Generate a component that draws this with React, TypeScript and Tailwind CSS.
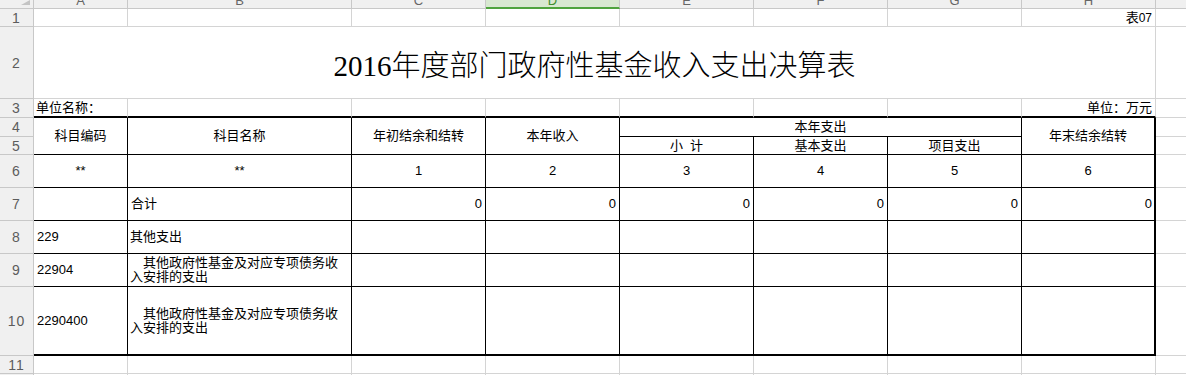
import React from "react";

const GL = "border-[#d4d4d4]";

const colLetters = [
  { l: "A", cls: "col-start-2" },
  { l: "B", cls: "col-start-3" },
  { l: "C", cls: "col-start-4" },
  { l: "D", cls: "col-start-5" },
  { l: "E", cls: "col-start-6" },
  { l: "F", cls: "col-start-7" },
  { l: "G", cls: "col-start-8" },
  { l: "H", cls: "col-start-9" },
];

const rowHeads = [
  { n: "1", cls: "row-start-2" },
  { n: "2", cls: "row-start-3" },
  { n: "3", cls: "row-start-4" },
  { n: "4", cls: "row-start-5" },
  { n: "5", cls: "row-start-6" },
  { n: "6", cls: "row-start-7" },
  { n: "7", cls: "row-start-8" },
  { n: "8", cls: "row-start-9" },
  { n: "9", cls: "row-start-10" },
  { n: "10", cls: "row-start-11" },
  { n: "11", cls: "row-start-12" },
  { n: "", cls: "row-start-13" },
];

const dataCols = [
  "col-start-4",
  "col-start-5",
  "col-start-6",
  "col-start-7",
  "col-start-8",
];

export default function App() {
  const base =
    "box-border overflow-hidden flex items-center text-[13px] leading-[14px] text-black";
  const tcell = `${base} border-r border-b border-black bg-white`;
  const gcell = `${base} border-r border-b ${GL} bg-white`;
  const num = "text-[12px]";

  return (
    <div
      className="w-[1186px] h-[375px] overflow-hidden bg-white"
      style={{ fontFamily: '"Liberation Sans", "Noto Sans CJK SC", sans-serif' }}
    >
      <div className="grid w-[1186px] grid-cols-[34px_94px_224px_134px_134px_134px_134px_134px_134px_30px] grid-rows-[9px_18px_72px_19px_19px_18px_33px_33px_33px_33px_69px_18px_2px]">
        {/* corner */}
        <div className="col-start-1 row-start-1 box-border border-r border-b border-[#c8c8c8] bg-[#f0f0f0] relative overflow-hidden">
          <svg className="absolute right-[3px] top-0" width="9" height="5" viewBox="0 0 9 5">
            <polygon points="9,0 9,5 0,5" fill="#c4c4c4" />
          </svg>
        </div>
        {/* column headers */}
        {colLetters.map((c) =>
          c.l === "D" ? (
            <div
              key={c.l}
              className={`${c.cls} row-start-1 box-border border-r border-b-2 border-r-[#c8c8c8] border-b-[#4fa33e] bg-[#d8e8d1] overflow-hidden flex justify-center`}
            >
              <span className="block -mt-[6px] leading-[13px] text-[13px] text-[#3f8f2f]">{c.l}</span>
            </div>
          ) : (
            <div
              key={c.l}
              className={`${c.cls} row-start-1 box-border border-r border-b border-[#c8c8c8] bg-[#f0f0f0] overflow-hidden flex justify-center`}
            >
              <span className="block -mt-[6px] leading-[13px] text-[13px] text-[#666666]">{c.l}</span>
            </div>
          )
        )}
        <div className="col-start-10 row-start-1 box-border border-b border-[#c8c8c8] bg-[#f0f0f0]" />

        {/* row headers */}
        {rowHeads.map((r) => (
          <div
            key={r.cls}
            className={`col-start-1 ${r.cls} box-border border-r border-b border-[#c8c8c8] bg-[#f0f0f0] flex items-center justify-center overflow-hidden text-[14px] leading-[14px] tracking-[1px] text-[#5c5c5c]`}
          >
            {r.n}
          </div>
        ))}

        {/* row 1 */}
        <div className={`col-start-2 row-start-2 ${gcell}`} />
        <div className={`col-start-3 row-start-2 ${gcell}`} />
        <div className={`col-start-4 row-start-2 ${gcell}`} />
        <div className={`col-start-5 row-start-2 ${gcell}`} />
        <div className={`col-start-6 row-start-2 ${gcell}`} />
        <div className={`col-start-7 row-start-2 ${gcell}`} />
        <div className={`col-start-8 row-start-2 ${gcell}`} />
        <div className={`col-start-9 row-start-2 ${gcell} justify-end pr-[3px]`}>
          表<span className={num}>07</span>
        </div>
        <div className={`col-start-10 row-start-2 box-border border-b ${GL}`} />

        {/* row 2 title */}
        <div
          className={`col-start-2 col-span-8 row-start-3 box-border border-r border-b ${GL} flex items-center justify-center pt-[6px] text-[29px] leading-[32px] font-light text-black`}
          style={{ fontFamily: '"Liberation Serif", "Noto Sans CJK SC", serif' }}
        >
          2016年度部门政府性基金收入支出决算表
        </div>
        <div className={`col-start-10 row-start-3 box-border border-b ${GL}`} />

        {/* row 3 */}
        <div className={`col-start-2 row-start-4 ${base} border-r ${GL} border-b-2 border-b-black pl-[2px]`}>
          单位名称：
        </div>
        <div className={`col-start-3 row-start-4 ${base} border-r ${GL} border-b-2 border-b-black`} />
        <div className={`col-start-4 row-start-4 ${base} border-r ${GL} border-b-2 border-b-black`} />
        <div className={`col-start-5 row-start-4 ${base} border-r ${GL} border-b-2 border-b-black`} />
        <div className={`col-start-6 row-start-4 ${base} border-r ${GL} border-b-2 border-b-black`} />
        <div className={`col-start-7 row-start-4 ${base} border-r ${GL} border-b-2 border-b-black`} />
        <div className={`col-start-8 row-start-4 ${base} border-r ${GL} border-b-2 border-b-black`} />
        <div className={`col-start-9 row-start-4 ${base} border-r ${GL} border-b-2 border-b-black justify-end pr-[3px]`}>
          单位：万元
        </div>
        <div className={`col-start-10 row-start-4 box-border border-b ${GL}`} />

        {/* rows 4-5 header */}
        <div className={`col-start-2 row-start-5 row-span-2 ${tcell} justify-center`}>科目编码</div>
        <div className={`col-start-3 row-start-5 row-span-2 ${tcell} justify-center`}>科目名称</div>
        <div className={`col-start-4 row-start-5 row-span-2 ${tcell} justify-center`}>年初结余和结转</div>
        <div className={`col-start-5 row-start-5 row-span-2 ${tcell} justify-center`}>本年收入</div>
        <div className={`col-start-6 col-span-3 row-start-5 ${tcell} justify-center`}>本年支出</div>
        <div className={`col-start-9 row-start-5 row-span-2 ${base} border-b border-r-2 border-black bg-white justify-center`}>
          年末结余结转
        </div>
        <div className={`col-start-10 row-start-5 box-border border-b ${GL}`} />
        <div className={`col-start-6 row-start-6 ${tcell} justify-center`}>小&nbsp;&nbsp;计</div>
        <div className={`col-start-7 row-start-6 ${tcell} justify-center`}>基本支出</div>
        <div className={`col-start-8 row-start-6 ${tcell} justify-center`}>项目支出</div>
        <div className={`col-start-10 row-start-6 box-border border-b ${GL}`} />

        {/* row 6 */}
        <div className={`col-start-2 row-start-7 ${tcell} justify-center ${num}`}>**</div>
        <div className={`col-start-3 row-start-7 ${tcell} justify-center ${num}`}>**</div>
        <div className={`col-start-4 row-start-7 ${tcell} justify-center ${num}`}>1</div>
        <div className={`col-start-5 row-start-7 ${tcell} justify-center ${num}`}>2</div>
        <div className={`col-start-6 row-start-7 ${tcell} justify-center ${num}`}>3</div>
        <div className={`col-start-7 row-start-7 ${tcell} justify-center ${num}`}>4</div>
        <div className={`col-start-8 row-start-7 ${tcell} justify-center ${num}`}>5</div>
        <div className={`col-start-9 row-start-7 ${base} border-b border-r-2 border-black justify-center ${num}`}>6</div>
        <div className={`col-start-10 row-start-7 box-border border-b ${GL}`} />

        {/* row 7 */}
        <div className={`col-start-2 row-start-8 ${tcell}`} />
        <div className={`col-start-3 row-start-8 ${tcell} pl-[3px]`}>合计</div>
        {dataCols.map((c) => (
          <div key={c} className={`${c} row-start-8 ${tcell} justify-end pr-[3px] ${num}`}>
            0
          </div>
        ))}
        <div className={`col-start-9 row-start-8 ${base} border-b border-r-2 border-black justify-end pr-[2px] ${num}`}>0</div>
        <div className={`col-start-10 row-start-8 box-border border-b ${GL}`} />

        {/* row 8 */}
        <div className={`col-start-2 row-start-9 ${tcell} pl-[3px] ${num}`}>229</div>
        <div className={`col-start-3 row-start-9 ${tcell} pl-[2px]`}>其他支出</div>
        <div className={`col-start-4 row-start-9 ${tcell}`} />
        <div className={`col-start-5 row-start-9 ${tcell}`} />
        <div className={`col-start-6 row-start-9 ${tcell}`} />
        <div className={`col-start-7 row-start-9 ${tcell}`} />
        <div className={`col-start-8 row-start-9 ${tcell}`} />
        <div className={`col-start-9 row-start-9 ${base} border-b border-r-2 border-black`} />
        <div className={`col-start-10 row-start-9 box-border border-b ${GL}`} />

        {/* row 9 */}
        <div className={`col-start-2 row-start-10 ${tcell} pl-[3px] ${num}`}>22904</div>
        <div className={`col-start-3 row-start-10 ${tcell} pl-[2px]`}>
          <div>
            <div className="pl-[13px]">其他政府性基金及对应专项债务收</div>
            <div>入安排的支出</div>
          </div>
        </div>
        <div className={`col-start-4 row-start-10 ${tcell}`} />
        <div className={`col-start-5 row-start-10 ${tcell}`} />
        <div className={`col-start-6 row-start-10 ${tcell}`} />
        <div className={`col-start-7 row-start-10 ${tcell}`} />
        <div className={`col-start-8 row-start-10 ${tcell}`} />
        <div className={`col-start-9 row-start-10 ${base} border-b border-r-2 border-black`} />
        <div className={`col-start-10 row-start-10 box-border border-b ${GL}`} />

        {/* row 10 */}
        <div className={`col-start-2 row-start-11 ${base} border-r border-b-2 border-black pl-[3px] ${num}`}>2290400</div>
        <div className={`col-start-3 row-start-11 ${base} border-r border-b-2 border-black pl-[2px]`}>
          <div>
            <div className="pl-[13px]">其他政府性基金及对应专项债务收</div>
            <div>入安排的支出</div>
          </div>
        </div>
        <div className={`col-start-4 row-start-11 ${base} border-r border-b-2 border-black`} />
        <div className={`col-start-5 row-start-11 ${base} border-r border-b-2 border-black`} />
        <div className={`col-start-6 row-start-11 ${base} border-r border-b-2 border-black`} />
        <div className={`col-start-7 row-start-11 ${base} border-r border-b-2 border-black`} />
        <div className={`col-start-8 row-start-11 ${base} border-r border-b-2 border-black`} />
        <div className={`col-start-9 row-start-11 ${base} border-r-2 border-b-2 border-black`} />
        <div className={`col-start-10 row-start-11 box-border border-b ${GL}`} />

        {/* row 11 */}
        <div className={`col-start-2 row-start-12 ${gcell}`} />
        <div className={`col-start-3 row-start-12 ${gcell}`} />
        <div className={`col-start-4 row-start-12 ${gcell}`} />
        <div className={`col-start-5 row-start-12 ${gcell}`} />
        <div className={`col-start-6 row-start-12 ${gcell}`} />
        <div className={`col-start-7 row-start-12 ${gcell}`} />
        <div className={`col-start-8 row-start-12 ${gcell}`} />
        <div className={`col-start-9 row-start-12 ${gcell}`} />
        <div className={`col-start-10 row-start-12 box-border border-b ${GL}`} />

        {/* row 12 partial */}
        <div className={`col-start-2 row-start-13 box-border border-r ${GL}`} />
        <div className={`col-start-3 row-start-13 box-border border-r ${GL}`} />
        <div className={`col-start-4 row-start-13 box-border border-r ${GL}`} />
        <div className={`col-start-5 row-start-13 box-border border-r ${GL}`} />
        <div className={`col-start-6 row-start-13 box-border border-r ${GL}`} />
        <div className={`col-start-7 row-start-13 box-border border-r ${GL}`} />
        <div className={`col-start-8 row-start-13 box-border border-r ${GL}`} />
        <div className={`col-start-9 row-start-13 box-border border-r ${GL}`} />
      </div>
    </div>
  );
}
